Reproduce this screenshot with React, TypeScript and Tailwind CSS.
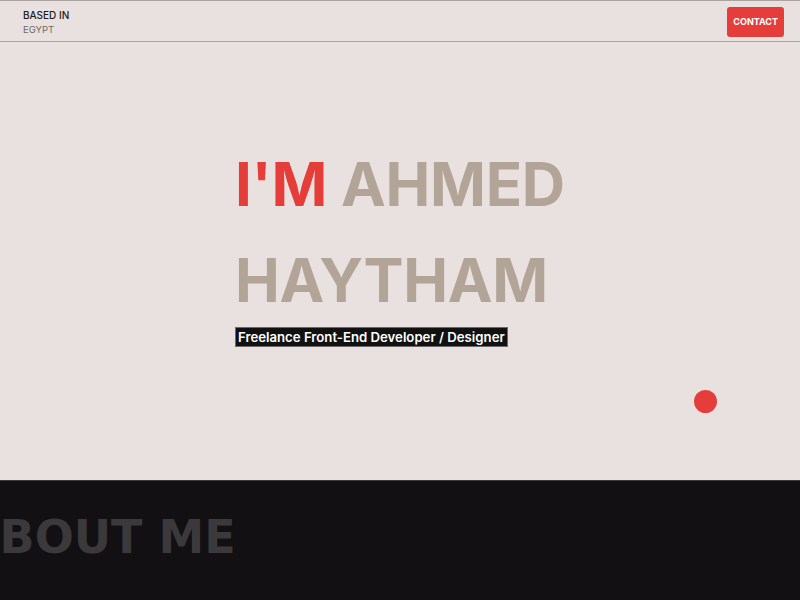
import React from "react";

export default function App() {
  return (
    <div className="w-[800px] h-[600px] overflow-hidden bg-[#e9e1df]" style={{ fontFamily: "Inter, 'Liberation Sans', sans-serif" }}>
      <header className="h-[42px] border-t border-b border-[#a9a3a2] flex items-center justify-between pl-[23px] pr-[16px]">
        <div className="flex flex-col leading-none mt-[2px]">
          <span className="text-[10px] font-medium text-[#1b1b1b]">BASED IN</span>
          <span className="text-[9.5px] text-[#6f6a69] mt-[5px]">EGYPT</span>
        </div>
        <button className="h-[30px] px-[6px] rounded-[3px] bg-[#e53d3a] text-white text-[9px] font-bold mt-[1px]">CONTACT</button>
      </header>
      <section className="h-[438px] relative">
        <div className="pl-[235px] pt-[94px]">
          <h1 className="text-[60px] font-bold leading-[96px] tracking-[-0.005em] text-[#b3a498]">
            <span className="text-[#e53d3a]">I'M</span> AHMED
            <br />
            HAYTHAM
          </h1>
          <div className="mt-[-1px] block w-fit bg-[#111] border border-[#6a6a6a] px-[2px] h-[20px] leading-[18px] text-white text-[13.2px] font-semibold">
            Freelance Front-End Developer / Designer
          </div>
        </div>
        <div className="absolute left-[694px] top-[348px] w-[23px] h-[23px] rounded-full bg-[#e53d3a]" />
      </section>
      <section className="h-[120px] bg-[#121013] border-t border-[#3a3839] overflow-hidden">
        <div className="ml-[-36px] pt-[33px] text-[46px] font-bold leading-[46px] text-[#3b393c] whitespace-nowrap" style={{ fontFamily: "'DejaVu Sans', sans-serif" }}>
          ABOUT ME
        </div>
      </section>
    </div>
  );
}
